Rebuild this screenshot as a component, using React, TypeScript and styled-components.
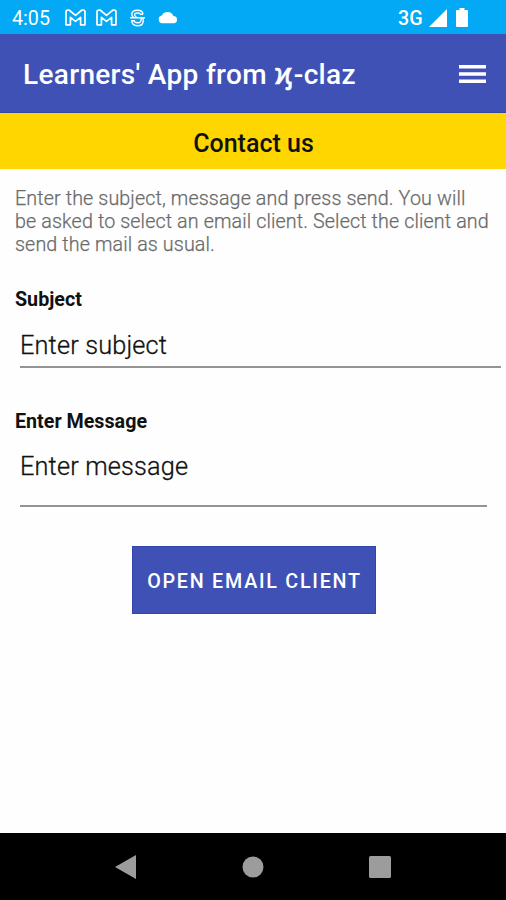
import React from "react";
import styled, { createGlobalStyle } from "styled-components";

const GlobalStyle = createGlobalStyle`
  *, *::before, *::after { box-sizing: border-box; }
  body { margin: 0; background: #fff; }
`;

const Screen = styled.div`
  width: 506px;
  height: 900px;
  display: flex;
  flex-direction: column;
  overflow: hidden;
  background: #fefefe;
  color: #111;
  font-family: Roboto, "Noto Sans", sans-serif;
`;

const StatusBar = styled.header`
  height: 34px;
  flex: none;
  display: flex;
  align-items: center;
  padding: 1px 38px 0 12px;
  background: #03a9f4;
  color: #fff;
`;

const StatusText = styled.span<{ $width: number; $weight?: number }>`
  width: ${(p) => p.$width}px;
  padding-top: 2px;
  font-size: 19.7px;
  line-height: 24px;
  font-weight: ${(p) => p.$weight ?? 400};
  white-space: nowrap;
`;

const StatusIcons = styled.div`
  display: flex;
  align-items: center;
  flex: 1;
`;

const Glyph = styled.svg<{ $left?: number }>`
  display: block;
  flex: none;
  margin-left: ${(p) => p.$left ?? 0}px;
`;

const AppBar = styled.div`
  height: 79px;
  flex: none;
  display: flex;
  align-items: center;
  justify-content: space-between;
  padding: 1px 20px 0 23px;
  background: #3f51b5;
  border-bottom: 1px solid #35479f;
  color: #fff;
`;

const AppTitle = styled.h1`
  margin: 3px 0 0;
  font-size: 28px;
  line-height: 34px;
  font-weight: 500;
  letter-spacing: 0.32px;
  white-space: nowrap;
`;

const KaiSymbol = styled.span`
  font-family: "Liberation Sans", sans-serif;
  font-size: 30px;
  line-height: 1;
  font-weight: 400;
  letter-spacing: 1.6px;
  -webkit-text-stroke: 0.6px currentColor;
`;

const MenuButton = styled.button`
  padding: 0;
  border: 0;
  background: none;
  color: inherit;
`;

const Heading = styled.h2`
  height: 56px;
  flex: none;
  margin: 0;
  padding: 3px 0 0 1px;
  background: #ffd600;
  font-size: 25px;
  line-height: 56px;
  font-weight: 500;
  text-align: center;
`;

const Form = styled.main`
  flex: 1;
  display: flex;
  flex-direction: column;
  padding: 18px 5px 0 15px;
`;

const Instructions = styled.p`
  margin: 0;
  color: #6a6a6a;
  font-size: 19.7px;
  line-height: 23px;
  font-weight: 300;
  letter-spacing: 0.12px;
  -webkit-text-stroke: 0.25px currentColor;
  white-space: nowrap;
`;

const Label = styled.div<{ $top: number }>`
  margin-top: ${(p) => p.$top}px;
  font-size: 19.7px;
  line-height: 24px;
  font-weight: 700;
`;

const Field = styled.div<{ $top: number; $height: number; $right?: number }>`
  height: ${(p) => p.$height}px;
  margin: ${(p) => p.$top}px ${(p) => p.$right ?? 0}px 0 5px;
  border-bottom: 2px solid #949494;
  font-size: 25.3px;
  line-height: 30px;
  font-weight: 300;
  letter-spacing: 0.16px;
  -webkit-text-stroke: 0.3px currentColor;
`;

const SendButton = styled.button`
  align-self: center;
  width: 244px;
  height: 68px;
  margin: 39px 9px 0 0;
  padding: 2px 0 0 2px;
  border: 1px solid #3145aa;
  background: #3f51b5;
  color: #fff;
  font: 500 19.7px Roboto, sans-serif;
  letter-spacing: 1.76px;
  white-space: nowrap;
`;

const NavBar = styled.nav`
  height: 67px;
  flex: none;
  display: flex;
  align-items: center;
  justify-content: space-between;
  padding: 0 115px;
  background: #000;
`;

const MailIcon = ({ left }: { left?: number }) => (
  <Glyph $left={left} width="21" height="17" viewBox="0 0 21 17" fill="none" stroke="#fff" strokeWidth="1.7" strokeLinejoin="round">
    <path d="M1 15.8V3Q1 1 3 1H4L10.5 6.4L17 1H18Q20 1 20 3V15.8H15.6V8.3L10.5 12.4L5.4 8.3V15.8Z" />
  </Glyph>
);

const App = () => (
  <>
    <GlobalStyle />
    <Screen>
      <StatusBar>
        <StatusText $width={53}>4:05</StatusText>
        <StatusIcons>
          <MailIcon />
          <MailIcon left={10} />
          <Glyph $left={13} width="15" height="18" viewBox="0 0 15 18" fill="none" stroke="#fff" strokeWidth="1.4">
            <path d="M13 5.4Q12.8 1.2 7.5 1.2Q1.8 1.2 1.8 5.2Q1.8 7.6 3.6 8.7M13 5.4H10.6Q10.2 4 7.5 4Q4.6 4 4.6 5.7Q4.6 7.2 7 8.7M0 8.7H15M11 8.7Q12 13.8 7.5 13.8Q4.4 13.8 4.2 11.8H1.8Q2 16.8 7.5 16.8Q13.2 16.8 13.2 12Q13.2 10 12.6 8.7" />
          </Glyph>
          <Glyph $left={13} width="20" height="13" viewBox="0 0 20 13" fill="#fff">
            <path d="M4.3 12.3A4 4 0 0 1 3.9 4.4A6.4 6.4 0 0 1 15.4 5A3.7 3.7 0 0 1 16.2 12.3Z" />
          </Glyph>
        </StatusIcons>
        <StatusText $width={31} $weight={500}>3G</StatusText>
        <Glyph width="18" height="18" viewBox="0 0 18 18" fill="#fff">
          <path d="M18 0V18H0Z" />
        </Glyph>
        <Glyph $left={9} width="12" height="19" viewBox="0 0 12 19" fill="#fff">
          <path d="M3.5 0H8.5V2H11Q12 2 12 3V18Q12 19 11 19H1Q0 19 0 18V3Q0 2 1 2H3.5Z" />
        </Glyph>
      </StatusBar>
      <AppBar>
        <AppTitle>
          Learners' App from <KaiSymbol>ϗ</KaiSymbol>-claz
        </AppTitle>
        <MenuButton aria-label="Menu">
          <Glyph width="27" height="18" viewBox="0 0 27 18" fill="currentColor">
            <path d="M0 0H27V3.5H0ZM0 7.3H27V10.8H0ZM0 14.5H27V18H0Z" />
          </Glyph>
        </MenuButton>
      </AppBar>
      <Heading>Contact us</Heading>
      <Form>
        <Instructions>
          Enter the subject, message and press send. You will
          <br />
          be asked to select an email client. Select the client and
          <br />
          send the mail as usual.
        </Instructions>
        <Label $top={32}>Subject</Label>
        <Field $top={19} $height={37}>Enter subject</Field>
        <Label $top={42}>Enter Message</Label>
        <Field $top={18} $height={55} $right={14}>Enter message</Field>
        <SendButton>OPEN EMAIL CLIENT</SendButton>
      </Form>
      <NavBar>
        <Glyph width="21" height="24" viewBox="0 0 21 24" fill="#9c9c9c">
          <path d="M21 0V24L0 12Z" />
        </Glyph>
        <Glyph width="22" height="22" viewBox="0 0 22 22" fill="#9c9c9c">
          <circle cx="11" cy="11" r="10.5" />
        </Glyph>
        <Glyph width="22" height="22" viewBox="0 0 22 22" fill="#9c9c9c">
          <rect width="22" height="22" rx="1.5" />
        </Glyph>
      </NavBar>
    </Screen>
  </>
);

export default App;
